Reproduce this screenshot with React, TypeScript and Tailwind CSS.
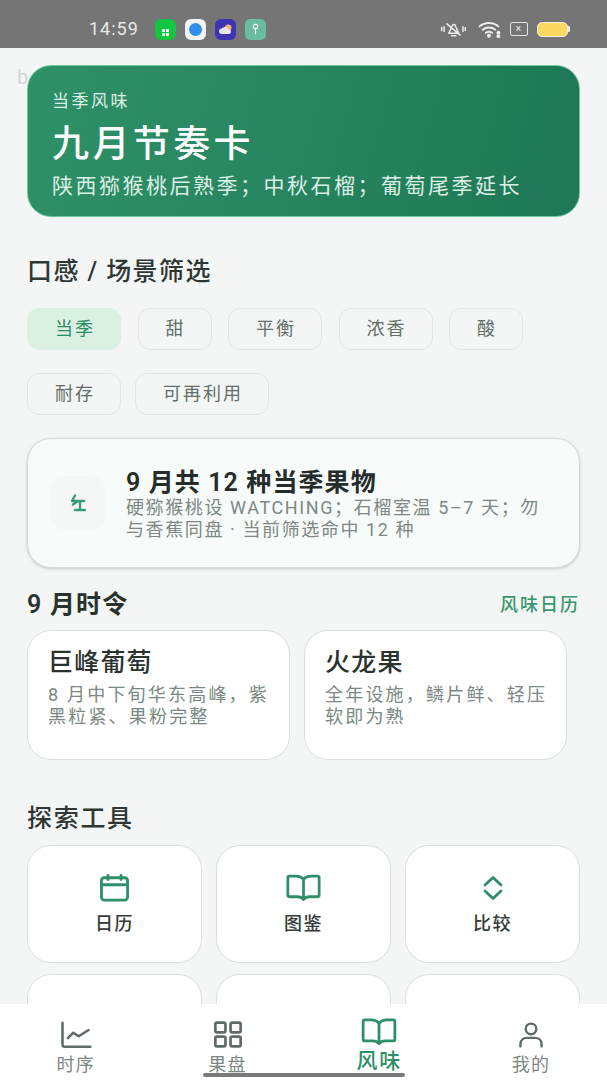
const FONT = "font-['Roboto','Noto_Sans_CJK_SC',sans-serif]";

function BookIcon({ className }: { className?: string }) {
  return (
    <svg viewBox="0 0 38 30" fill="none" stroke="currentColor" strokeWidth="3" strokeLinejoin="round" strokeLinecap="round" className={className}>
      <path d="M19 5.500C17 3 14 2 11 2H3.500C2.600 2 2 2.600 2 3.500V23c0 .9.6 1.500 1.500 1.500H12c3 0 5.500 .8 7 3 1.500-2.200 4-3 7-3h8.500c.9 0 1.500-.6 1.500-1.500V3.500C36 2.600 35.400 2 34.500 2H27c-3 0-6 1-8 3.500Z" />
      <path d="M19 5.500V27" />
    </svg>
  );
}

function CalendarIcon() {
  return (
    <svg viewBox="0 0 32 30" fill="none" stroke="currentColor" strokeWidth="3" strokeLinecap="round" strokeLinejoin="round" className="h-[28px] w-[31px]">
      <rect x="2" y="4" width="28" height="24" rx="3" />
      <path d="M2 11.500H30M9 1.500V6M23 1.500V6" />
    </svg>
  );
}

function UpDownIcon() {
  return (
    <svg viewBox="0 0 20 26" fill="none" stroke="currentColor" strokeWidth="2.800" strokeLinecap="round" strokeLinejoin="round" className="h-[26px] w-[20px]">
      <path d="M2 10L10 2.500L18 10M2 16L10 23.500L18 16" />
    </svg>
  );
}

function StatusBar() {
  return (
    <div className="flex h-[48px] shrink-0 items-center bg-[#757575] pt-[12px] pb-[2px]">
      <span className="ml-[89px] w-[66px] text-[18px] leading-none tracking-[1px] text-[#e8e8e8]">14:59</span>
      <div className="flex items-center gap-[9px]">
        <span className="flex h-[21px] w-[21px] items-end justify-center rounded-[6px] bg-[#12c63f] pb-[4px]">
          <span className="grid grid-cols-2 gap-[1px]">
            <i className="h-[3px] w-[3px] bg-white/90" />
            <i className="h-[3px] w-[3px] bg-white/90" />
            <i className="h-[3px] w-[3px] bg-white/90" />
            <i className="h-[3px] w-[3px] bg-white/90" />
          </span>
        </span>
        <span className="flex h-[21px] w-[21px] items-center justify-center rounded-[6px] bg-[#f1f5fa]">
          <span className="h-[13px] w-[13px] rounded-full bg-[#2f8fe6]" />
        </span>
        <span className="flex h-[21px] w-[21px] items-center justify-center rounded-[6px] bg-[#3d33b4]">
          <svg viewBox="0 0 16 12" className="h-[11px] w-[15px]">
            <circle cx="11" cy="4" r="3.500" fill="#f3b574" />
            <path d="M4 11a3 3 0 0 1 0-6 4 4 0 0 1 7 1 2.500 2.500 0 0 1 1 5Z" fill="#e9e6f6" />
          </svg>
        </span>
        <span className="flex h-[21px] w-[21px] items-center justify-center rounded-[5px] bg-[#69bd9f]">
          <svg viewBox="0 0 10 14" fill="none" stroke="white" strokeWidth="1.400" className="h-[12px] w-[9px]">
            <circle cx="5" cy="4" r="2.500" />
            <path d="M5 6.500V13" />
          </svg>
        </span>
      </div>
      <div className="ml-auto flex items-center pr-[37px] text-[#ececec]">
        <svg viewBox="0 0 28 18" fill="none" stroke="currentColor" strokeWidth="1.600" strokeLinejoin="round" strokeLinecap="round" className="h-[17px] w-[27px]">
          <path d="M9 13L13 4.500C13.600 3.300 15 3.300 15.700 4.500L19.500 13ZM12 15.500H16.500M7 3L21 15" />
          <path d="M1.500 7V10M4 6V11M24 6V11M26.500 7V10" />
        </svg>
        <svg viewBox="0 0 22 16" fill="none" stroke="currentColor" strokeWidth="1.800" strokeLinecap="round" className="ml-[11px] h-[17px] w-[23px]">
          <path d="M1.500 5C6.500 .7 14.500 .7 19.500 5M4.500 8.200C8 5.400 13 5.400 16.500 8.200M7.500 11.200C9.200 10 11.800 10 13.500 11.200" />
          <circle cx="10.500" cy="14" r="1" fill="currentColor" />
          <circle cx="19.500" cy="11" r="1" fill="currentColor" />
          <circle cx="19.500" cy="14.500" r="1" fill="currentColor" />
        </svg>
        <span className="ml-[9px] flex h-[14px] w-[18px] items-center justify-center rounded-[2px] border-[1.500px] border-[#e6e6e6]">
          <span className="text-[10px] leading-none">×</span>
        </span>
        <span className="ml-[9px] flex items-center">
          <span className="h-[15px] w-[31px] rounded-[5px] border-[1.500px] border-[#f1efe0] bg-[#fbd95f]" />
          <span className="ml-[0.500px] h-[6px] w-[2px] rounded-r-[1px] bg-[#e8e8e8]" />
        </span>
      </div>
    </div>
  );
}

function Chip({ label, active }: { label: string; active?: boolean }) {
  return (
    <span
      className={
        active
          ? "flex h-[42px] items-center rounded-[12px] border border-[#d9f0e3] bg-[#d9f0e3] pr-[25px] pl-[27px] text-[18px] leading-none tracking-[2px] text-[#2d8a63]"
          : "flex h-[42px] items-center rounded-[12px] border border-[#e0e6e3] pr-[25px] pl-[27px] text-[18px] leading-none tracking-[2px] text-[#626e69]"
      }
    >
      {label}
    </span>
  );
}

function SeasonCard({ title, lines }: { title: string; lines: string[] }) {
  return (
    <div className="h-[130px] w-[263px] shrink-0 rounded-[24px] border border-[#d9dfdc] bg-white pt-[17px] pl-[20px]">
      <p className="text-[25px] leading-[30px] font-medium tracking-[1.200px] text-[#2a322f]">{title}</p>
      <div className="mt-[6px] text-[18px] leading-[21.500px] tracking-[2.200px] text-[#7b8782]">
        {lines.map((line) => (
          <p key={line} className="whitespace-nowrap">{line}</p>
        ))}
      </div>
    </div>
  );
}

function ToolCard({ label, icon }: { label?: string; icon?: React.ReactNode }) {
  return (
    <div className="flex h-[118px] flex-col items-center rounded-[24px] border border-[#dadfdd] bg-white pt-[27px]">
      <div className="flex h-[30px] items-center text-[#2f8f68]">{icon}</div>
      {label && <span className="mt-[10px] text-[18px] leading-[22px] font-medium tracking-[1.500px] text-[#333a37]">{label}</span>}
    </div>
  );
}

function NavItem({ label, active, children }: { label: string; active?: boolean; children: React.ReactNode }) {
  return (
    <div className={active ? "flex w-[152px] flex-col items-center text-[#2f8f68]" : "flex w-[152px] flex-col items-center text-[#5f6b66]"}>
      <div className={active ? "flex h-[31px] items-end" : "mt-[2px] flex h-[31px] items-end"}>{children}</div>
      <span className={active ? "mt-[2px] text-[21px] leading-[26px] font-medium tracking-[2px]" : "mt-[5px] text-[18px] leading-[24px] tracking-[1.500px] text-[#7d8783]"}>{label}</span>
    </div>
  );
}

export default function App() {
  return (
    <div className={`${FONT} flex h-[1080px] w-[607px] flex-col overflow-hidden bg-[#f3f6f5]`}>
      <StatusBar />
      <main className="relative min-h-0 flex-1 overflow-hidden px-[27px] pt-[17px]">
        <span className="absolute top-[16px] left-[17px] text-[20px] leading-[26px] text-[#d4d6d5]">b</span>

        <section className="relative h-[152px] rounded-[24px] border border-[#6fc79f] bg-[linear-gradient(105deg,#2f9168,#1f7755)] pt-[25px] pl-[24px]">
          <p className="text-[17px] leading-[20px] tracking-[2.500px] text-[#dcefe6]">当季风味</p>
          <h1 className="mt-[12px] text-[37px] leading-[44px] font-medium tracking-[3.400px] text-[#fafdfb]">九月节奏卡</h1>
          <p className="mt-[6px] text-[21px] leading-[26px] tracking-[2.500px] whitespace-nowrap text-[#dcefe6]">{"陕西猕猴桃后熟季\uFF1B中秋石榴\uFF1B葡萄尾季延长"}</p>
        </section>

        <h2 className="mt-[41px] text-[25px] leading-[28px] font-medium tracking-[1.400px] text-[#2f3734]">口感 / 场景筛选</h2>
        <div className="mt-[22px] flex flex-col gap-[23px]">
          <div className="flex gap-[16.500px]">
            <Chip label="当季" active />
            <Chip label="甜" />
            <Chip label="平衡" />
            <Chip label="浓香" />
            <Chip label="酸" />
          </div>
          <div className="flex gap-[14px]">
            <Chip label="耐存" />
            <Chip label="可再利用" />
          </div>
        </div>

        <section className="mt-[23px] flex h-[130px] items-center rounded-[24px] border border-[#d5dbd8] bg-[#f7fbf9] pl-[23px] shadow-[0_1px_3px_rgba(0,0,0,0.18)]">
          <div className="flex h-[54px] w-[54px] shrink-0 items-center justify-center rounded-[14px] bg-[#f4f7f6] text-[#3a9c74]">
            <svg viewBox="0 0 16 18" fill="none" stroke="currentColor" strokeWidth="2.400" strokeLinecap="round" strokeLinejoin="round" className="h-[18px] w-[16px]">
              <path d="M5 1.500L2 7H8L3 10.500M10 7V15.500M5 16H15M9 7H14" />
            </svg>
          </div>
          <div className="mt-[4px] ml-[21px]">
            <p className="text-[25px] leading-[28px] font-semibold tracking-[1.100px] text-[#252c29]">9 月共 12 种当季果物</p>
            <div className="text-[18px] leading-[22px] tracking-[1.600px] whitespace-nowrap text-[#7d8884]">
              <p>{"硬猕猴桃设 WATCHING\uFF1B石榴室温 5–7 天\uFF1B勿"}</p>
              <p>与香蕉同盘 · 当前筛选命中 12 种</p>
            </div>
          </div>
        </section>

        <div className="mt-[23px] flex h-[28px] items-center justify-between">
          <h2 className="text-[25px] leading-[28px] font-semibold tracking-[1.200px] text-[#2a322f]">9 月时令</h2>
          <span className="text-[18px] leading-[22px] font-medium tracking-[2px] text-[#3a9670]">风味日历</span>
        </div>

        <div className="mt-[11px] flex gap-[14px]">
          <SeasonCard title="巨峰葡萄" lines={["8 月中下旬华东高峰\uFF0C紫", "黑粒紧、果粉完整"]} />
          <SeasonCard title="火龙果" lines={["全年设施\uFF0C鳞片鲜、轻压", "软即为熟"]} />
        </div>

        <h2 className="mt-[45px] text-[25px] leading-[28px] font-medium tracking-[1.700px] text-[#2f3734]">探索工具</h2>

        <div className="mt-[12px] grid grid-cols-3 gap-x-[14px] gap-y-[11px]">
          <ToolCard label="日历" icon={<CalendarIcon />} />
          <ToolCard label="图鉴" icon={<BookIcon className="h-[28px] w-[35px]" />} />
          <ToolCard label="比较" icon={<UpDownIcon />} />
          <ToolCard />
          <ToolCard />
          <ToolCard />
        </div>
      </main>

      <nav className="relative flex h-[76px] shrink-0 bg-white pt-[11px]">
        <NavItem label="时序">
          <svg viewBox="0 0 34 30" fill="none" stroke="currentColor" strokeWidth="2.800" strokeLinecap="round" strokeLinejoin="round" className="h-[27px] w-[34px]">
            <path d="M2 2V26C2 27.500 2.800 28.500 4.500 28.500H33" />
            <path d="M8 19L14 13L20 17L31 10" />
          </svg>
        </NavItem>
        <NavItem label="果盘">
          <svg viewBox="0 0 34 32" fill="none" stroke="currentColor" strokeWidth="3.200" strokeLinejoin="round" className="h-[27px] w-[34px]">
            <rect x="2" y="2" width="12" height="11.500" rx="2" />
            <rect x="20" y="2" width="12" height="11.500" rx="2" />
            <rect x="2" y="18.500" width="12" height="11.500" rx="2" />
            <rect x="20" y="18.500" width="12" height="11.500" rx="2" />
          </svg>
        </NavItem>
        <NavItem label="风味" active>
          <BookIcon className="h-[28px] w-[38px]" />
        </NavItem>
        <NavItem label="我的">
          <svg viewBox="0 0 30 32" fill="none" stroke="currentColor" strokeWidth="3" strokeLinecap="round" className="h-[26px] w-[28px]">
            <circle cx="15" cy="8.500" r="6.500" />
            <path d="M2 30V27C2 22 6 19.500 10 19.500H20C24 19.500 28 22 28 27V30" />
          </svg>
        </NavItem>
        <span className="absolute top-[69px] left-[203px] h-[4px] w-[202px] rounded-full bg-[#7a7a7a]" />
      </nav>
    </div>
  );
}
